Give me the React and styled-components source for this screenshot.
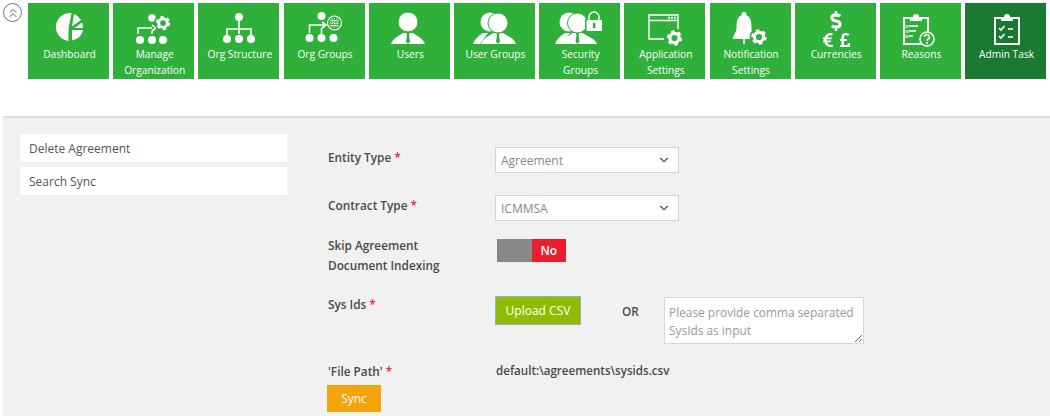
import React from "react";
import styled, { createGlobalStyle } from "styled-components";
import { ChevronsUp, ChevronDown } from "lucide-react";
import { FaDollarSign, FaEuroSign, FaPoundSign } from "react-icons/fa";

const GlobalStyle = createGlobalStyle`
  html, body {
    margin: 0;
    padding: 0;
    background: #fff;
    font-family: "Open Sans", "Noto Sans", sans-serif;
    overflow: hidden;
  }
`;

const GREEN = "#2eb03a";
const DARK = "#1a7a32";

const Page = styled.div`
  width: 1050px;
  height: 416px;
  overflow: hidden;
`;

const TopBar = styled.div`
  height: 116px;
  display: flex;
  align-items: flex-start;
  padding: 3px 4px 0 3px;
  box-sizing: border-box;
`;

const Collapse = styled.button`
  width: 19px;
  height: 19px;
  margin-right: 6px;
  padding: 0;
  flex: none;
  display: flex;
  align-items: center;
  justify-content: center;
  border: 1px solid #777;
  border-radius: 50%;
  background: #fff;
  color: #444;
`;

const Tiles = styled.div`
  flex: 1;
  display: grid;
  grid-template-columns: repeat(12, 81px);
  column-gap: 4.2px;
`;

const Tile = styled.div`
  height: 76px;
  background: ${(p) => (p.$active ? DARK : GREEN)};
  color: #fff;
  text-align: center;
  font-size: 10.2px;
  line-height: 16px;
  svg {
    display: block;
    overflow: visible;
  }
`;

const TileLabel = styled.div`
  padding: 0 6px 0 8px;
`;

const Panel = styled.div`
  margin-left: 3px;
  height: 300px;
  display: flex;
  background: #f2f1f1;
  border-top: 2px solid #dedede;
`;

const Sidebar = styled.div`
  width: 267px;
  margin: 16px 41px 0 17px;
  display: flex;
  flex-direction: column;
  gap: 5px;
`;

const SideItem = styled.div`
  height: 28px;
  background: #fff;
  padding: 1px 0 0 9px;
  box-sizing: border-box;
  font-size: 12px;
  line-height: 28px;
  color: #555;
`;

const Form = styled.div`
  flex: 1;
`;

const Row = styled.div`
  display: grid;
  grid-template-columns: 167px 1fr;
  margin-top: ${(p) => p.$top}px;
`;

const Label = styled.div`
  font-size: 11.8px;
  line-height: 20px;
  font-weight: 600;
  color: #4a4a4a;
`;

const Star = styled.span`
  color: #ee2233;
`;

const Select = styled.div`
  width: 184px;
  height: 26px;
  box-sizing: border-box;
  border: 1px solid #d4d4d4;
  background: #fff;
  padding: 0 7px 0 5px;
  display: flex;
  align-items: center;
  justify-content: space-between;
  font-size: 12px;
  color: #888;
`;

const Toggle = styled.div`
  width: 69px;
  height: 23px;
  margin: 4px 0 0 2px;
  display: grid;
  grid-template-columns: 1fr 1fr;
  background: #888;
`;

const ToggleOff = styled.div`
  background: #ee1c2e;
  color: #fff;
  font-size: 12px;
  font-weight: 600;
  line-height: 23px;
  text-align: center;
`;

const SysIds = styled.div`
  display: flex;
  align-items: flex-start;
`;

const UploadButton = styled.button`
  width: 86px;
  height: 29px;
  margin-top: 2px;
  padding: 0;
  box-sizing: border-box;
  background: #8fbc00;
  border: 1px solid #8cb4e0;
  color: #fff;
  font: 12px "Open Sans", sans-serif;
`;

const Or = styled.div`
  width: 42px;
  margin: 9px 0 0 41px;
  font-size: 11.8px;
  font-weight: 600;
  color: #4a4a4a;
`;

const Note = styled.textarea`
  width: 200px;
  height: 47px;
  margin: 3px 0 0;
  padding: 5px 4px;
  box-sizing: border-box;
  border: 1px solid #d8d8d8;
  background: #fff;
  font: 11.9px/18px "Open Sans", sans-serif;
  outline: none;
  &::placeholder {
    color: #999;
  }
`;

const PathValue = styled.div`
  padding-left: 1px;
  font-size: 11.6px;
  line-height: 20px;
  font-weight: 600;
  color: #4a4a4a;
`;

const SyncButton = styled.button`
  display: block;
  width: 54px;
  height: 27px;
  margin: 4px 0 0 -1px;
  padding: 0;
  border: none;
  background: #f4a40b;
  color: #fff;
  font: 12px "Open Sans", sans-serif;
`;

const Gear = ({ x, y, r = 8, bg = GREEN }) => (
  <g>
    <circle cx={x} cy={y} r={r + 2} fill={bg} />
    <circle cx={x} cy={y} r={r * 0.62} fill="none" stroke="#fff" strokeWidth={r * 0.42} />
    <circle
      cx={x}
      cy={y}
      r={r * 0.88}
      fill="none"
      stroke="#fff"
      strokeWidth={r * 0.3}
      strokeDasharray={`${r * 0.46} ${r * 0.46}`}
    />
  </g>
);

const Dots = ({ xs, y }) => xs.map((x) => <circle key={x} cx={x} cy={y} r="4" fill="#fff" />);

const Person = ({ x, y = 19, r = 10, left, right, bg = GREEN }) => (
  <g>
    <circle cx={x} cy={y} r={r} fill="#fff" stroke={bg} strokeWidth="1" />
    <path
      d={`M${left} 41 C${left + 2} 35 ${x - 9} 33 ${x - 5} 30 L${x + 5} 30 C${x + 9} 33 ${right - 2} 35 ${right} 41 Z`}
      fill="#fff"
    />
    <path d={`M${x - 1.6} 30 h3.2 l-.6 2.4 l1 6 l-2 2.6 l-2 -2.6 l1 -6 z`} fill={bg} />
  </g>
);

const BackPerson = ({ cx, left }) => (
  <g>
    <circle cx={cx} cy="19" r="9.5" fill="#fff" />
    <path d={`M${left} 41 C${left + 2} 36 ${left + 5} 33 ${left + 10} 30 L${left + 15} 30 L${left + 7} 41 Z`} fill="#fff" />
  </g>
);

const Clipboard = ({ x, children }) => (
  <g fill="none" stroke="#fff" strokeWidth="2">
    <path d={`M${x + 7} 15 h-6 v26 h24 v-26 h-6`} />
    <path d={`M${x + 7} 18 v-4 h3 a3 3 0 0 1 6 0 h3 v4 z`} fill="#fff" stroke="none" />
    {children}
  </g>
);

const icons = {
  dashboard: (
    <g fill="#fff">
      <path d="M43.5 10 A14 14 0 1 0 40.5 38 L40.5 26 Z" />
      <path d="M46 11 A14 14 0 0 1 53 17 L44 23.5 Z" />
      <path d="M54 19.5 A14 14 0 0 1 55 25 H46.5 Z" />
      <path d="M44 27 H55 A14 14 0 0 1 44 37.5 Z" />
    </g>
  ),
  manage: (
    <g>
      <circle cx="39" cy="15" r="3.8" fill="#fff" />
      <path d="M25 31 V25 H39 M39 22 L43 25 L39 28 M39 28 V31" fill="none" stroke="#fff" strokeWidth="1.6" />
      <Gear x={50} y={20} r={7} />
      <Dots xs={[27, 39, 50]} y={37} />
    </g>
  ),
  structure: (
    <g>
      <circle cx="41" cy="14" r="4" fill="#fff" />
      <path d="M41 18 V31 M29 32 V26 H53 V32" fill="none" stroke="#fff" strokeWidth="1.6" />
      <Dots xs={[29, 41, 53]} y={36} />
    </g>
  ),
  groups: (
    <g>
      <circle cx="37.5" cy="13" r="4" fill="#fff" />
      <path d="M25.5 30 V22 H41 M38 19 L42 22 L38 25 M37.5 25 V31" fill="none" stroke="#fff" strokeWidth="1.6" />
      <circle cx="50.5" cy="20" r="7" fill="none" stroke="#fff" strokeWidth="1.2" />
      <path d="M46 17.5 h9 M46 20 h9 M46 22.5 h9 M48 15 v10 M50.5 15 v10 M53 15 v10" stroke="#fff" strokeWidth="1" strokeDasharray="1.4 1" />
      <Dots xs={[25.5, 37.5, 49.5]} y={35} />
    </g>
  ),
  users: <Person x={39} left={22} right={56} />,
  userGroups: (
    <g>
      <BackPerson cx={36} left={19} />
      <Person x={44} y={20} r={10} left={27} right={62} />
    </g>
  ),
  security: (
    <g>
      <BackPerson cx={30} left={16} />
      <Person x={38.5} y={20} r={10} left={23} right={58} />
      <rect x="46" y="16" width="18" height="14" fill={GREEN} />
      <rect x="47.5" y="17" width="15.5" height="11" rx="1" fill="#fff" />
      <path d="M50 17 V14 a5 5 0 0 1 10 0 V17" fill="none" stroke="#fff" strokeWidth="1.4" />
      <rect x="54" y="20" width="2.5" height="5" fill={GREEN} />
    </g>
  ),
  settings: (
    <g>
      <path d="M40 36 H25 V12 H54 V28 M25 17.5 H54" fill="none" stroke="#fff" strokeWidth="1.4" />
      <path d="M44 14.8 h8" stroke="#fff" strokeWidth="2" strokeDasharray="2 1" />
      <Gear x={50.5} y={35} r={7.5} />
    </g>
  ),
  notification: (
    <g>
      <circle cx="34" cy="11.5" r="2.5" fill="#fff" />
      <path d="M34 12 C27 12 26.5 19 26.5 25 C26.5 30 23 32 23 36 H45 C45 32 41.5 30 41.5 25 C41.5 19 41 12 34 12 Z" fill="#fff" />
      <path d="M34 36 V41" stroke="#fff" strokeWidth="1.6" />
      <Gear x={49} y={34} r={7.5} />
    </g>
  ),
  currencies: (
    <g color="#fff">
      <FaDollarSign x={31} y={8} size={20} />
      <FaEuroSign x={25} y={29} size={16} />
      <FaPoundSign x={42} y={29} size={16} />
    </g>
  ),
  reasons: (
    <g>
      <Clipboard x={23}>
        <path d="M29 23 h9 M29 28 h7 M29 33 h4" strokeWidth="1.6" />
        <path d="M24.5 22 l3 3 m0 -3 l-3 3 M24.5 27 l3 3 m0 -3 l-3 3 M24.5 32 l3 3 m0 -3 l-3 3" strokeWidth="1" transform="translate(1 0)" />
      </Clipboard>
      <circle cx="47" cy="36" r="7" fill={GREEN} stroke="#fff" strokeWidth="1.6" />
      <path d="M44.6 34 a2.4 2.4 0 1 1 3.6 2 c-.8.5 -1.2 1 -1.2 1.8" fill="none" stroke="#fff" strokeWidth="1.5" />
      <circle cx="47" cy="40" r="1" fill="#fff" />
    </g>
  ),
  task: (
    <Clipboard x={29}>
      <path d="M34 25 l2 2 l3.5 -4 M34 33 l2 2 l3.5 -4" strokeWidth="1.6" />
      <path d="M43 26 h5 M43 34 h5" strokeWidth="1.6" />
    </Clipboard>
  ),
};

const tiles = [
  { key: "dashboard", label: "Dashboard" },
  { key: "manage", label: "Manage Organization" },
  { key: "structure", label: "Org Structure" },
  { key: "groups", label: "Org Groups" },
  { key: "users", label: "Users" },
  { key: "userGroups", label: "User Groups" },
  { key: "security", label: "Security Groups" },
  { key: "settings", label: "Application Settings" },
  { key: "notification", label: "Notification Settings" },
  { key: "currencies", label: "Currencies" },
  { key: "reasons", label: "Reasons" },
  { key: "task", label: "Admin Task", active: true },
];

const App = () => {
  return (
    <Page>
      <GlobalStyle />
      <TopBar>
        <Collapse>
          <ChevronsUp size={14} strokeWidth={1.6} />
        </Collapse>
        <Tiles>
          {tiles.map((t) => (
            <Tile key={t.key} $active={t.active}>
              <svg width="81" height="43" viewBox="0 0 81 43">
                {icons[t.key]}
              </svg>
              <TileLabel>{t.label}</TileLabel>
            </Tile>
          ))}
        </Tiles>
      </TopBar>
      <Panel>
        <Sidebar>
          <SideItem>Delete Agreement</SideItem>
          <SideItem>Search Sync</SideItem>
        </Sidebar>
        <Form>
          <Row $top={29}>
            <Label>
              Entity Type <Star>*</Star>
            </Label>
            <Select>
              Agreement <ChevronDown size={14} color="#555" />
            </Select>
          </Row>
          <Row $top={22}>
            <Label>
              Contract Type <Star>*</Star>
            </Label>
            <Select>
              ICMMSA <ChevronDown size={14} color="#555" />
            </Select>
          </Row>
          <Row $top={14}>
            <Label>
              Skip Agreement
              <br />
              Document Indexing
            </Label>
            <Toggle>
              <span />
              <ToggleOff>No</ToggleOff>
            </Toggle>
          </Row>
          <Row $top={19}>
            <Label>
              Sys Ids <Star>*</Star>
            </Label>
            <SysIds>
              <UploadButton>Upload CSV</UploadButton>
              <Or>OR</Or>
              <Note placeholder="Please provide comma separated SysIds as input" />
            </SysIds>
          </Row>
          <Row $top={17}>
            <Label>
              'File Path' <Star>*</Star>
            </Label>
            <PathValue>default:\agreements\sysids.csv</PathValue>
          </Row>
          <SyncButton>Sync</SyncButton>
        </Form>
      </Panel>
    </Page>
  );
};

export default App;
